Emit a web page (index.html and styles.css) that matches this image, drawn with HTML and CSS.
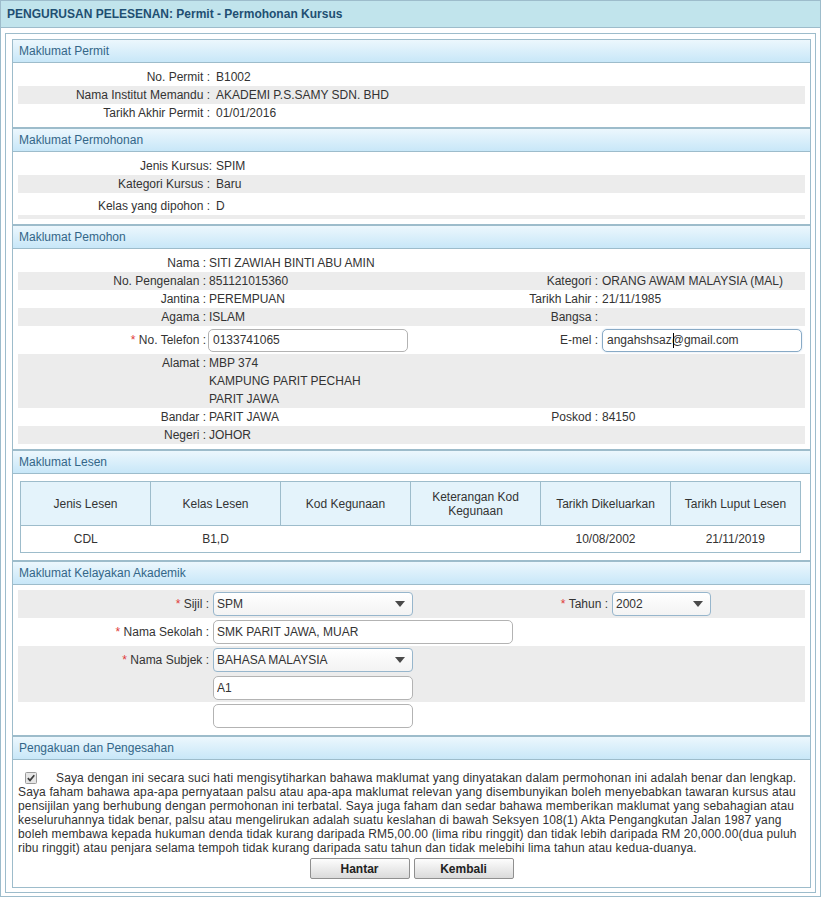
FILE: index.html
```html
<!DOCTYPE html>
<html lang="ms">
<head>
<meta charset="utf-8">
<title>PENGURUSAN PELESENAN: Permit - Permohonan Kursus</title>
<link rel="stylesheet" href="styles.css">
</head>
<body>
<div class="page">
  <div class="titlebar">PENGURUSAN PELESENAN: Permit - Permohonan Kursus</div>
  <div class="wrap">

    <section class="sec">
      <div class="sec-h">Maklumat Permit</div>
      <div class="sec-b">
        <div class="kv1"><span class="lbl">No. Permit :</span><span class="val">B1002</span></div>
        <div class="kv1 alt"><span class="lbl">Nama Institut Memandu :</span><span class="val">AKADEMI P.S.SAMY SDN. BHD</span></div>
        <div class="kv1"><span class="lbl">Tarikh Akhir Permit :</span><span class="val">01/01/2016</span></div>
      </div>
    </section>

    <section class="sec">
      <div class="sec-h">Maklumat Permohonan</div>
      <div class="sec-b">
        <div class="kv1"><span class="lbl lbl-tight">Jenis Kursus:</span><span class="val">SPIM</span></div>
        <div class="kv1 alt"><span class="lbl">Kategori Kursus :</span><span class="val">Baru</span></div>
        <div class="kv1 tall"><span class="lbl">Kelas yang dipohon :</span><span class="val">D</span></div>
        <div class="strip alt"></div>
      </div>
    </section>

    <section class="sec">
      <div class="sec-h">Maklumat Pemohon</div>
      <div class="sec-b">
        <div class="kv4"><span class="lbl">Nama :</span><span class="val">SITI ZAWIAH BINTI ABU AMIN</span><span class="lbl"></span><span class="val2"></span></div>
        <div class="kv4 alt"><span class="lbl">No. Pengenalan :</span><span class="val">851121015360</span><span class="lbl">Kategori :</span><span class="val2">ORANG AWAM MALAYSIA (MAL)</span></div>
        <div class="kv4"><span class="lbl">Jantina :</span><span class="val">PEREMPUAN</span><span class="lbl">Tarikh Lahir :</span><span class="val2">21/11/1985</span></div>
        <div class="kv4 alt"><span class="lbl">Agama :</span><span class="val">ISLAM</span><span class="lbl">Bangsa :</span><span class="val2"></span></div>
        <div class="kv4 row-input"><span class="lbl"><span class="req">*</span> No. Telefon :</span><span class="val"><input class="txt txt-tel" type="text" value="0133741065"></span><span class="lbl">E-mel :</span><span class="val2"><span class="focus-wrap"><input class="txt txt-mail" type="text" value="angahshsaz@gmail.com"><span class="caret"></span></span></span></div>
        <div class="kv4 alt"><span class="lbl">Alamat :</span><span class="val">MBP 374<br>KAMPUNG PARIT PECHAH<br>PARIT JAWA</span><span class="lbl"></span><span class="val2"></span></div>
        <div class="kv4"><span class="lbl">Bandar :</span><span class="val">PARIT JAWA</span><span class="lbl">Poskod :</span><span class="val2">84150</span></div>
        <div class="kv4 alt"><span class="lbl">Negeri :</span><span class="val">JOHOR</span><span class="lbl"></span><span class="val2"></span></div>
      </div>
    </section>

    <section class="sec">
      <div class="sec-h">Maklumat Lesen</div>
      <div class="sec-b">
        <table class="lesen">
          <thead>
            <tr><th>Jenis Lesen</th><th>Kelas Lesen</th><th>Kod Kegunaan</th><th>Keterangan Kod<br>Kegunaan</th><th>Tarikh Dikeluarkan</th><th>Tarikh Luput Lesen</th></tr>
          </thead>
          <tbody>
            <tr><td>CDL</td><td>B1,D</td><td></td><td></td><td>10/08/2002</td><td>21/11/2019</td></tr>
          </tbody>
        </table>
      </div>
    </section>

    <section class="sec">
      <div class="sec-h">Maklumat Kelayakan Akademik</div>
      <div class="sec-b">
        <div class="ak alt">
          <span class="lbl"><span class="req">*</span> Sijil :</span>
          <span class="cell"><span class="sel sel-w200"><span class="sel-t">SPM</span><span class="arrow"></span></span></span>
          <span class="lbl"><span class="req">*</span> Tahun :</span>
          <span class="cell"><span class="sel sel-w99"><span class="sel-t">2002</span><span class="arrow"></span></span></span>
        </div>
        <div class="ak">
          <span class="lbl"><span class="req">*</span> Nama Sekolah :</span>
          <span class="cell span3"><input class="txt txt-w300" type="text" value="SMK PARIT JAWA, MUAR"></span>
        </div>
        <div class="ak ak-2 alt">
          <span class="lbl lbl-top"><span class="req">*</span> Nama Subjek :</span>
          <span class="cell span3 stack">
            <span class="sel sel-w200"><span class="sel-t">BAHASA MALAYSIA</span><span class="arrow"></span></span>
            <input class="txt txt-w200" type="text" value="A1">
          </span>
        </div>
        <div class="ak">
          <span class="lbl"></span>
          <span class="cell span3"><input class="txt txt-w200" type="text" value=""></span>
        </div>
      </div>
    </section>

    <section class="sec">
      <div class="sec-h">Pengakuan dan Pengesahan</div>
      <div class="sec-b decl">
        <p class="decl-text"><svg class="chk" width="12" height="12" viewBox="0 0 12 12" aria-hidden="true"><rect x="0.5" y="0.5" width="11" height="11" rx="1" fill="#e6e6e6" stroke="#9a9a9a"/><path d="M2.8 6.2 L5 8.4 L9.3 3.3" fill="none" stroke="#3c3c3c" stroke-width="1.7"/></svg>Saya dengan ini secara suci hati mengisytiharkan bahawa maklumat yang dinyatakan dalam permohonan ini adalah benar dan lengkap.<br>Saya faham bahawa apa-apa pernyataan palsu atau apa-apa maklumat relevan yang disembunyikan boleh menyebabkan tawaran kursus atau<br>pensijilan yang berhubung dengan permohonan ini terbatal. Saya juga faham dan sedar bahawa memberikan maklumat yang sebahagian atau<br>keseluruhannya tidak benar, palsu atau mengelirukan adalah suatu keslahan di bawah Seksyen 108(1) Akta Pengangkutan Jalan 1987 yang<br>boleh membawa kepada hukuman denda tidak kurang daripada RM5,00.00 (lima ribu ringgit) dan tidak lebih daripada RM 20,000.00(dua puluh<br>ribu ringgit) atau penjara selama tempoh tidak kurang daripada satu tahun dan tidak melebihi lima tahun atau kedua-duanya.</p>
        <div class="btns">
          <button class="btn" type="button">Hantar</button>
          <button class="btn" type="button">Kembali</button>
        </div>
      </div>
    </section>

  </div>
</div>
</body>
</html>
```

FILE: styles.css
```css
* { box-sizing: border-box; }

body {
  margin: 0;
  font: 12px "Liberation Sans", Arial, sans-serif;
  color: #333;
  background: #fff;
}

.page {
  width: 821px;
  border: 1px solid #9dbccb;
}

.titlebar {
  height: 27px;
  line-height: 26px;
  padding-left: 6px;
  background: #c1e4ec;
  border-bottom: 1px solid #9dbccb;
  font-weight: bold;
  color: #1f4f72;
}

.wrap {
  margin: 5px 4px 3px 4px;
  border: 1px solid #9dbccb;
  padding: 5px 4px 4px 6px;
}

.sec {
  border: 1px solid #9dbccb;
}

.sec-h {
  height: 23px;
  line-height: 22px;
  padding-left: 6px;
  border-bottom: 1px solid #9dbccb;
  background: linear-gradient(#ecf7fd, #c8e7f8);
  color: #336688;
}

.sec-b {
  padding: 5px;
}

.alt { background: #ececec; }

.req { color: #e03a3a; }

/* permit / permohonan rows */
.kv1 {
  display: grid;
  grid-template-columns: 192px 1fr;
  height: 18px;
  line-height: 18px;
}
.kv1 .lbl { text-align: right; white-space: nowrap; }
.kv1 .val { padding-left: 6px; white-space: nowrap; }
.kv1 .lbl-tight { margin-right: -2px; }
.kv1.tall { height: 22px; padding-top: 4px; }
.strip { height: 4px; }

/* pemohon rows */
.kv4 {
  display: grid;
  grid-template-columns: 188px 203px 189px 1fr;
  line-height: 18px;
}
.kv4 .lbl { text-align: right; white-space: nowrap; }
.kv4 .val { padding-left: 3px; white-space: nowrap; }
.kv4 .val2 { padding-left: 4px; white-space: nowrap; }
.kv4.row-input { height: 28px; align-items: center; }

.txt {
  height: 23px;
  border: 1px solid #b3b3b3;
  border-radius: 5px;
  padding: 0 4px;
  font: 12px "Liberation Sans", Arial, sans-serif;
  color: #333;
  background: #fff;
  outline: none;
  display: block;
}
.txt-tel { width: 200px; margin-left: -1px; }
.txt-mail { width: 200px; border-color: #88aac6; box-shadow: 0 0 2px rgba(100, 150, 200, 0.35); }
.txt-w200 { width: 200px; height: 24px; padding-left: 3px; }
.txt-w300 { width: 300px; height: 24px; padding-left: 3px; }

.focus-wrap {
  position: relative;
  display: block;
  width: 200px;
}
.caret {
  position: absolute;
  left: 71px;
  top: 4px;
  width: 1px;
  height: 15px;
  background: #000;
}

/* lesen table */
.lesen {
  width: 781px;
  margin: 2px 0 2px 2px;
  border-collapse: collapse;
  table-layout: fixed;
  border: 1px solid #9dbccb;
}
.lesen th,
.lesen td {
  text-align: center;
  font-weight: normal;
  padding: 0;
  line-height: 14px;
}
.lesen th {
  background: #e4f3fb;
  height: 44px;
  border: 1px solid #9dbccb;
}
.lesen td {
  background: #fff;
  height: 27px;
  border-top: 1px solid #9dbccb;
  border-bottom: 1px solid #9dbccb;
}

/* akademik */
.ak {
  display: grid;
  grid-template-columns: 191px 300px 99px 1fr;
  height: 28px;
  align-items: center;
}
.ak .lbl { text-align: right; white-space: nowrap; line-height: 18px; }
.ak .cell { padding-left: 4px; }
.ak .span3 { grid-column: 2 / 5; }
.ak-2 { height: 56px; align-items: start; }
.ak-2 .lbl-top { padding-top: 5px; }
.stack { display: flex; flex-direction: column; gap: 4px; padding-top: 2px; }

.sel {
  display: flex;
  align-items: center;
  justify-content: space-between;
  height: 24px;
  border: 1px solid #97b6cc;
  border-radius: 4px;
  background: linear-gradient(#ffffff, #f3f3f3);
  padding: 0 7px 0 3px;
}
.sel-w200 { width: 200px; }
.sel-w99 { width: 99px; }
.arrow {
  width: 0;
  height: 0;
  border-left: 5px solid transparent;
  border-right: 5px solid transparent;
  border-top: 6px solid #4a4a4a;
}

/* declaration */
.decl { padding: 11px 5px 8px 5px; }
.decl-text {
  margin: 0;
  line-height: 14px;
  color: #333;
  white-space: nowrap;
  letter-spacing: 0.14px;
}
.chk {
  width: 12px;
  height: 12px;
  margin: 0 19px 0 7px;
  vertical-align: -2px;
}
.btns {
  display: flex;
  justify-content: center;
  gap: 4px;
  margin-top: 3px;
}
.btn {
  width: 100px;
  height: 21px;
  border: 1px solid #8f8f8f;
  border-radius: 2px;
  background: linear-gradient(#fdfdfd, #dadada);
  font: bold 12px "Liberation Sans", Arial, sans-serif;
  color: #222;
  padding: 0;
}
```
